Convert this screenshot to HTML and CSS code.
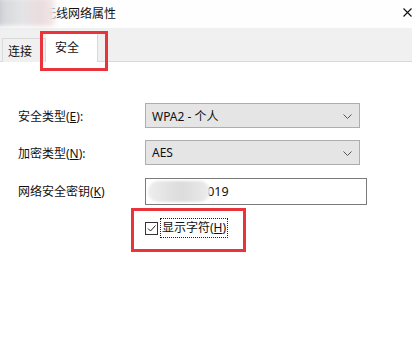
FILE: index.html
```html
<!DOCTYPE html>
<html lang="zh">
<head>
<meta charset="utf-8">
<link rel="stylesheet" href="styles.css">
</head>
<body>
<div class="window">
  <div class="titlebar">
    <span class="title">无线网络属性</span>
    <svg class="close" width="9" height="9" viewBox="0 0 9 9"><path d="M0.5 0.5 L8.5 8.5 M8.5 0.5 L0.5 8.5" stroke="#111" stroke-width="1.1" fill="none"/></svg>
    <div class="title-blur"></div>
  </div>
  <div class="tabs">
    <div class="tab">连接</div>
    <div class="tab active">安全</div>
  </div>
  <div class="content">
    <div class="form">
      <label class="lbl">安全类型(<u>E</u>):</label>
      <div class="combo"><span>WPA2 - 个人</span><svg class="chev" width="9" height="5" viewBox="0 0 9 5"><path d="M0.5 0.5 L4.5 4.5 L8.5 0.5" stroke="#555" stroke-width="1" fill="none"/></svg></div>
      <label class="lbl">加密类型(<u>N</u>):</label>
      <div class="combo"><span>AES</span><svg class="chev" width="9" height="5" viewBox="0 0 9 5"><path d="M0.5 0.5 L4.5 4.5 L8.5 0.5" stroke="#555" stroke-width="1" fill="none"/></svg></div>
      <label class="lbl">网络安全密钥(<u>K</u>)</label>
      <div class="field"><span class="keytext">2019</span><div class="key-blur"></div></div>
    </div>
    <div class="check-row">
      <span class="checkbox"><svg width="11" height="11" viewBox="0 0 11 11"><path d="M2 5.5 L4.5 8 L9.5 2.5" stroke="#222" stroke-width="1" fill="none"/></svg></span>
      <span class="check-label">显示字符(<u>H</u>)</span>
    </div>
  </div>
  <div class="mark mark-tab"></div>
  <div class="mark mark-check"></div>
</div>
</body>
</html>
```
FILE: styles.css
```css
* { box-sizing: border-box; }
html, body { margin: 0; padding: 0; background: #fff; }
body {
  width: 412px;
  height: 360px;
  overflow: hidden;
  font-family: "Noto Sans", "Noto Sans CJK SC", sans-serif;
  font-size: 12px;
  color: #000;
}
.window { position: relative; width: 412px; height: 360px; background: #fff; }
.titlebar {
  position: relative;
  height: 28px;
  display: flex;
  align-items: center;
  padding-left: 44px;
  background: #fefefe;
}
.title { font-size: 12px; color: #111; line-height: 1; }
.close { position: absolute; right: 0; top: 8px; }
.title-blur {
  position: absolute;
  left: -6px;
  top: -2px;
  width: 62px;
  height: 28px;
  background: linear-gradient(90deg, #b4b9c4 0%, #d8d9dd 16%, #e4e4e6 45%, #ebdcde 75%, #f1e4e5 92%, rgba(250,244,244,0.7) 100%);
  filter: blur(2px);
}
.tabs {
  height: 34px;
  background: #f0f0f0;
  border-bottom: 1px solid #d9d9d9;
  display: flex;
  align-items: flex-end;
  padding-left: 2px;
}
.tab {
  height: 24px;
  padding: 0 13px 0 5px;
  display: flex;
  align-items: center;
  border: 1px solid #d9d9d9;
  border-bottom: none;
  margin-bottom: -1px;
  background: #f0f0f0;
  color: #111;
}
.tab.active {
  height: 29px;
  width: 52px;
  border-left: none;
  padding: 0 0 3px 9px;
  background: #fff;
}
.content { padding: 41px 0 0 18px; }
.form {
  display: grid;
  grid-template-columns: 127px 215px;
  row-gap: 12px;
  align-items: center;
}
.lbl { color: #111; }
.combo {
  height: 25px;
  background: #e5e5e5;
  border: 1px solid #adadad;
  display: flex;
  align-items: center;
  justify-content: space-between;
  padding: 0 7px 0 6px;
  color: #111;
}
.chev { margin-top: 1px; }
.field {
  position: relative;
  width: 222px;
  height: 27px;
  border: 1px solid #7a7a7a;
  background: #fff;
  display: flex;
  align-items: center;
  padding-left: 54px;
  margin-top: 1px;
}
.keytext { font-size: 12.5px; color: #111; }
.key-blur {
  position: absolute;
  left: 2px;
  top: 2px;
  width: 62px;
  height: 21px;
  border-radius: 10px;
  background: linear-gradient(90deg, #eeeeee 0%, #e3e3e3 30%, #dcdcdc 55%, #e6e6e6 85%, #efefef 100%);
  filter: blur(1.2px);
}
.check-row {
  display: flex;
  align-items: center;
  margin: 13px 0 0 127px;
  gap: 2px;
}
.checkbox {
  width: 13px;
  height: 13px;
  border: 1px solid #333;
  background: #fff;
  display: flex;
  align-items: center;
  justify-content: center;
}
.check-label {
  border: 1px dotted #222;
  padding: 1px 1px 2px 1px;
  color: #111;
  line-height: 15px;
}
.mark {
  position: absolute;
  border: 3px solid #e8343a;
}
.mark-tab { left: 40px; top: 31px; width: 68px; height: 40px; }
.mark-check { left: 131px; top: 208px; width: 115px; height: 44px; }
```
